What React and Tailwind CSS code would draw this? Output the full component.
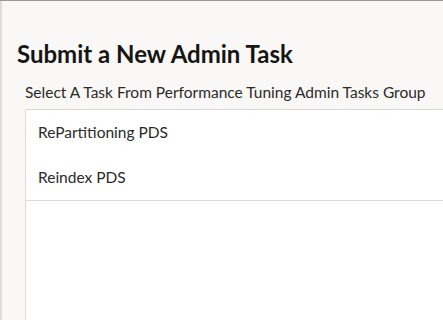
export default function App() {
  const tasks = ["RePartitioning PDS", "Reindex PDS"]

  return (
    <div className="w-[443px] h-[320px] overflow-hidden bg-[#dcdcdc] font-['Lato',sans-serif] text-[#161513]">
      <div className="h-[1px] bg-[#9a9a9a]" />
      <div className="ml-[1px] h-[319px] border-l border-[#e2e0dd] bg-[#f9f8f6] pt-[38px]">
        <h1 className="pl-[15px] text-[24px] font-bold leading-[30px] whitespace-nowrap">
          Submit a New Admin Task
        </h1>
        <p className="mt-[13px] pl-[23px] text-[15.5px] leading-[20px] text-[#2c2a28] whitespace-nowrap">
          Select A Task From Performance Tuning Admin Tasks Group
        </p>
        <div className="ml-[23px] mt-[7px] w-[480px] h-[260px] border border-[#dcdad6] bg-white">
          <ul className="border-b border-[#dcdad6]">
            {tasks.map(task => (
              <li key={task} className="h-[45px] flex items-center pl-[12px] text-[15.5px] text-[#2c2a28]">
                {task}
              </li>
            ))}
          </ul>
        </div>
      </div>
    </div>
  )
}
